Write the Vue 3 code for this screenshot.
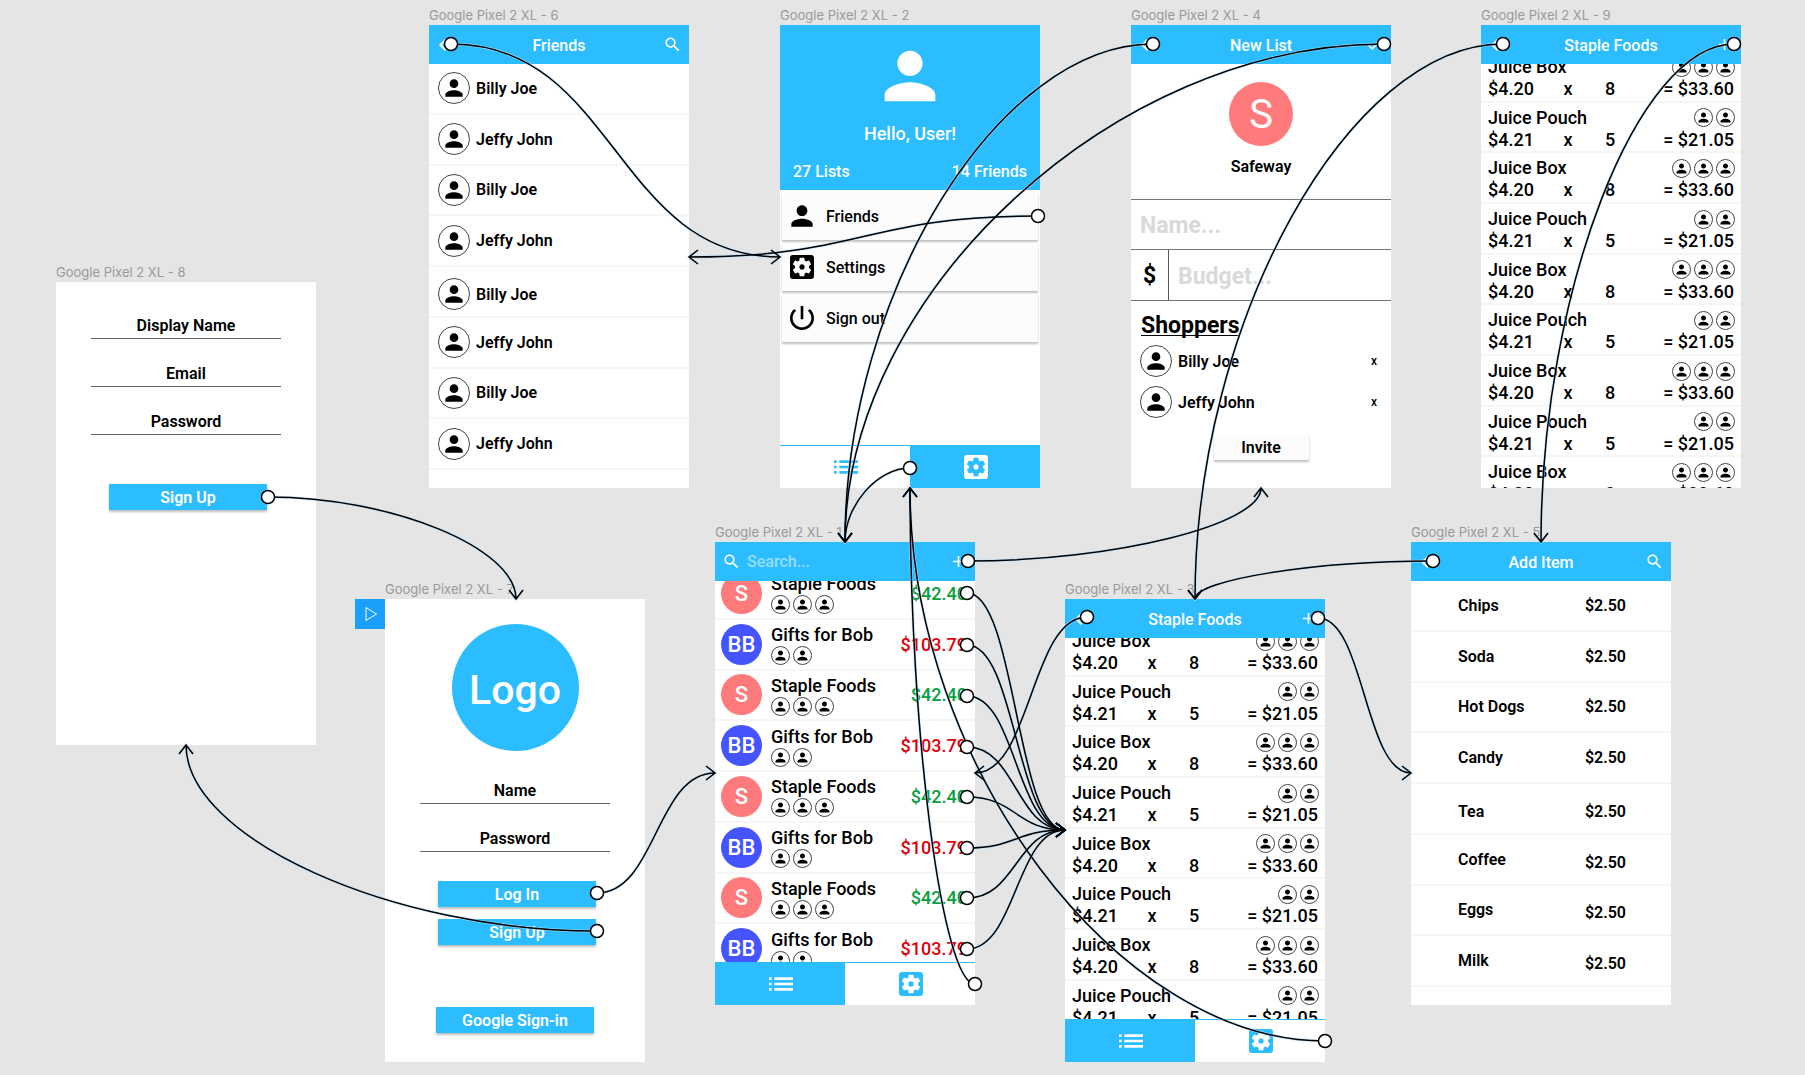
<script setup>
const frames = {
  friends: { x: 429, y: 25 },
  settings: { x: 780, y: 25 },
  newList: { x: 1131, y: 25 },
  itemsTop: { x: 1481, y: 25 },
  signUp: { x: 56, y: 282 },
  logIn: { x: 385, y: 599 },
  lists: { x: 715, y: 542 },
  items: { x: 1065, y: 599 },
  addItem: { x: 1411, y: 542 },
}

const place = (name) => ({ left: frames[name].x + 'px', top: frames[name].y + 'px' })

const friends = Array.from({ length: 8 }, (_, i) => ({
  name: i % 2 ? 'Jeffy John' : 'Billy Joe',
  low: i === 4,
}))

const lists = Array.from({ length: 8 }, (_, i) =>
  i % 2
    ? { name: 'Gifts for Bob', initials: 'BB', people: 2, total: '$103.79', over: true }
    : { name: 'Staple Foods', initials: 'S', people: 3, total: '$42.40', over: false },
)

const items = Array.from({ length: 9 }, (_, i) =>
  i % 2
    ? { name: 'Juice Pouch', price: '$4.21', qty: 5, total: '= $21.05', people: 2 }
    : { name: 'Juice Box', price: '$4.20', qty: 8, total: '= $33.60', people: 3 },
)

const itemScreens = [
  { key: 'itemsTop', label: 'Google Pixel 2 XL - 9', nav: false },
  { key: 'items', label: 'Google Pixel 2 XL - 3', nav: true },
]

const products = ['Chips', 'Soda', 'Hot Dogs', 'Candy', 'Tea', 'Coffee', 'Eggs', 'Milk'].map((name, i) => ({
  name,
  low: i === 4,
  lowPrice: i >= 4,
}))

const menu = [
  { icon: '#i-person', text: 'Friends' },
  { icon: '#i-settings', text: 'Settings' },
  { icon: '#i-power', text: 'Sign out' },
]

// Each link runs from a hotspot to the edge of a frame; `side` is the way the arrow points.
const links = [
  { from: [451, 44], to: [780, 257], side: 'right' },
  { from: [1038, 216], to: [689, 257], side: 'left' },
  { from: [1153, 44], to: [845, 542], side: 'down' },
  { from: [1384, 44], to: [845, 542], side: 'down' },
  { from: [1503, 44], to: [1195, 599], side: 'down' },
  { from: [1734, 44], to: [1541, 542], side: 'down' },
  { from: [268, 497], to: [516, 599], side: 'down' },
  { from: [597, 931], to: [186, 745], side: 'up' },
  { from: [597, 893], to: [715, 773], side: 'right' },
  { from: [968, 561], to: [1261, 488], side: 'up' },
  ...[593, 645, 696, 747, 797, 848, 898, 949].map((y) => ({ from: [967, y], to: [1065, 830], side: 'right' })),
  { from: [975, 984], to: [910, 488], side: 'up' },
  { from: [1325, 1041], to: [910, 488], side: 'up' },
  { from: [910, 468], to: [845, 542], side: 'down' },
  { from: [1087, 617], to: [975, 773], side: 'left' },
  { from: [1318, 618], to: [1411, 773], side: 'right' },
  { from: [1433, 561], to: [1195, 599], side: 'down' },
]

const curve = ({ from: [x1, y1], to: [x2, y2], side }) => {
  const mx = (x1 + x2) / 2
  const my = (y1 + y2) / 2
  return side === 'left' || side === 'right'
    ? `M${x1} ${y1}C${mx} ${y1} ${mx} ${y2} ${x2} ${y2}`
    : `M${x1} ${y1}C${mx} ${y1} ${x2} ${my} ${x2} ${y2}`
}

const head = ({ to: [x, y], side }) =>
  ({
    right: `M${x - 9} ${y - 7}L${x} ${y}L${x - 9} ${y + 7}`,
    left: `M${x + 9} ${y - 7}L${x} ${y}L${x + 9} ${y + 7}`,
    down: `M${x - 7} ${y - 9}L${x} ${y}L${x + 7} ${y - 9}`,
    up: `M${x - 7} ${y + 9}L${x} ${y}L${x + 7} ${y + 9}`,
  })[side]

const paths = links.map((l) => curve(l) + head(l))
</script>

<template>
  <main class="canvas">
    <svg class="defs" aria-hidden="true">
      <symbol id="i-person" viewBox="0 0 24 24"><path d="M12 12c2.21 0 4-1.79 4-4s-1.79-4-4-4-4 1.79-4 4 1.79 4 4 4zm0 2c-2.67 0-8 1.34-8 4v2h16v-2c0-2.66-5.33-4-8-4z" /></symbol>
      <symbol id="i-search" viewBox="0 0 24 24"><path d="M15.5 14h-.79l-.28-.27C15.41 12.59 16 11.11 16 9.5 16 5.91 13.09 3 9.5 3S3 5.91 3 9.5 5.91 16 9.5 16c1.61 0 3.09-.59 4.23-1.57l.27.28v.79l5 4.99L20.49 19l-4.99-5zm-6 0C7.01 14 5 11.99 5 9.5S7.01 5 9.5 5 14 7.01 14 9.5 11.99 14 9.5 14z" /></symbol>
      <symbol id="i-back" viewBox="0 0 24 24"><path d="M15.41 7.41L14 6l-6 6 6 6 1.41-1.41L10.83 12z" /></symbol>
      <symbol id="i-add" viewBox="0 0 24 24"><path d="M19 13h-6v6h-2v-6H5v-2h6V5h2v6h6v2z" /></symbol>
      <symbol id="i-check" viewBox="0 0 24 24"><path d="M9 16.17L4.83 12l-1.42 1.41L9 19 21 7l-1.41-1.41z" /></symbol>
      <symbol id="i-list" viewBox="0 0 24 24"><path d="M3 13h2v-2H3v2zm0 4h2v-2H3v2zm0-8h2V7H3v2zm4 4h14v-2H7v2zm0 4h14v-2H7v2zM7 7v2h14V7H7z" /></symbol>
      <symbol id="i-power" viewBox="0 0 24 24"><path d="M13 3h-2v10h2V3zm4.83 2.17l-1.42 1.42C17.99 7.86 19 9.81 19 12c0 3.87-3.13 7-7 7s-7-3.13-7-7c0-2.19 1.01-4.14 2.58-5.42L6.17 5.17C4.23 6.82 3 9.26 3 12c0 4.97 4.03 9 9 9s9-4.03 9-9c0-2.74-1.23-5.18-3.17-6.83z" /></symbol>
      <symbol id="i-settings" viewBox="0 0 24 24"><path d="M12 10c-1.1 0-2 .9-2 2s.9 2 2 2 2-.9 2-2-.9-2-2-2zm7-7H5c-1.11 0-2 .9-2 2v14c0 1.1.89 2 2 2h14c1.11 0 2-.9 2-2V5c0-1.1-.89-2-2-2zm-1.75 9c0 .23-.02.46-.05.68l1.48 1.16c.13.11.17.3.08.45l-1.4 2.42c-.09.15-.27.21-.43.15l-1.74-.7c-.36.28-.76.51-1.18.69l-.26 1.85c-.03.17-.18.3-.35.3h-2.8c-.17 0-.32-.13-.35-.29l-.26-1.85c-.43-.18-.82-.41-1.18-.69l-1.74.7c-.16.06-.34 0-.43-.15l-1.4-2.42c-.09-.15-.05-.34.08-.45l1.48-1.16c-.03-.23-.05-.46-.05-.69 0-.23.02-.46.05-.68l-1.48-1.16c-.13-.11-.17-.3-.08-.45l1.4-2.42c.09-.15.27-.21.43-.15l1.74.7c.36-.28.76-.51 1.18-.69l.26-1.85c.03-.17.18-.3.35-.3h2.8c.17 0 .32.13.35.29l.26 1.85c.43.18.82.41 1.18.69l1.74-.7c.16-.06.34 0 .43.15l1.4 2.42c.09.15.05.34-.08.45l-1.48 1.16c.03.23.05.46.05.69z" /></symbol>
    </svg>

    <!-- Friends -->
    <section class="frame" :style="place('friends')">
      <h2 class="label">Google Pixel 2 XL - 6</h2>
      <header class="bar">
        <button class="back" aria-label="Back"><svg><use href="#i-back" /></svg></button>
        <h3 class="title">Friends</h3>
        <button class="action" aria-label="Search"><svg><use href="#i-search" /></svg></button>
      </header>
      <ul class="rows eight">
        <li v-for="(f, i) in friends" :key="i" class="row friend">
          <span class="person" :class="{ low: f.low }">
            <span class="face"><svg><use href="#i-person" /></svg></span>{{ f.name }}
          </span>
        </li>
      </ul>
    </section>

    <!-- Settings -->
    <section class="frame" :style="place('settings')">
      <h2 class="label">Google Pixel 2 XL - 2</h2>
      <header class="profile">
        <svg class="portrait"><use href="#i-person" /></svg>
        <h3 class="hello">Hello, User!</h3>
        <div class="stats"><span>27 Lists</span><span>14 Friends</span></div>
      </header>
      <div class="menu">
        <button v-for="m in menu" :key="m.text" class="entry">
          <svg><use :href="m.icon" /></svg>{{ m.text }}
        </button>
      </div>
      <nav class="tabs">
        <button class="tab" aria-label="Lists"><svg><use href="#i-list" /></svg></button>
        <button class="tab active" aria-label="Settings"><svg><use href="#i-settings" /></svg></button>
      </nav>
    </section>

    <!-- New list -->
    <section class="frame" :style="place('newList')">
      <h2 class="label">Google Pixel 2 XL - 4</h2>
      <header class="bar">
        <button class="back" aria-label="Back"><svg><use href="#i-back" /></svg></button>
        <h3 class="title">New List</h3>
        <button class="action" aria-label="Save"><svg><use href="#i-check" /></svg></button>
      </header>
      <div class="store">
        <span class="store-badge">S</span>
        <p class="store-name">Safeway</p>
      </div>
      <div class="entry-line"><input class="big" type="text" placeholder="Name..." aria-label="Name" /></div>
      <div class="entry-line last">
        <label class="currency" for="budget">$</label>
        <input id="budget" class="big" type="text" placeholder="Budget..." />
      </div>
      <h3 class="shoppers-title">Shoppers</h3>
      <ul class="shoppers">
        <li v-for="n in ['Billy Joe', 'Jeffy John']" :key="n" class="shopper">
          <span class="person"><span class="face"><svg><use href="#i-person" /></svg></span>{{ n }}</span>
          <button class="remove" :aria-label="'Remove ' + n">x</button>
        </li>
      </ul>
      <button class="invite">Invite</button>
    </section>

    <!-- List contents -->
    <section v-for="s in itemScreens" :key="s.key" class="frame" :style="place(s.key)">
      <h2 class="label">{{ s.label }}</h2>
      <header class="bar">
        <button class="back" aria-label="Back"><svg><use href="#i-back" /></svg></button>
        <h3 class="title">Staple Foods</h3>
        <button class="action" aria-label="Add"><svg><use href="#i-add" /></svg></button>
      </header>
      <div class="scroller">
        <ul class="rows nine scrolled">
          <li v-for="(it, i) in items" :key="i" class="row item">
            <div class="item-head">
              <span>{{ it.name }}</span>
              <span class="bubbles">
                <span v-for="p in it.people" :key="p" class="bubble"><svg><use href="#i-person" /></svg></span>
              </span>
            </div>
            <div class="item-sum">
              <span>{{ it.price }}</span><span>x</span><span>{{ it.qty }}</span><span>{{ it.total }}</span>
            </div>
          </li>
        </ul>
      </div>
      <nav v-if="s.nav" class="tabs">
        <button class="tab active" aria-label="Lists"><svg><use href="#i-list" /></svg></button>
        <button class="tab" aria-label="Settings"><svg><use href="#i-settings" /></svg></button>
      </nav>
    </section>

    <!-- Sign up -->
    <section class="frame" :style="place('signUp')">
      <h2 class="label">Google Pixel 2 XL - 8</h2>
      <form class="form signup" @submit.prevent>
        <input class="field" type="text" placeholder="Display Name" aria-label="Display Name" />
        <input class="field" type="email" placeholder="Email" aria-label="Email" />
        <input class="field" type="password" placeholder="Password" aria-label="Password" />
        <div class="actions signup-actions"><button class="cta">Sign Up</button></div>
      </form>
    </section>

    <!-- Log in -->
    <section class="frame" :style="place('logIn')">
      <h2 class="label">Google Pixel 2 XL - 7</h2>
      <button class="play" aria-label="Present">
        <svg viewBox="0 0 30 30"><path d="M11 8.5V21.5L21.5 15Z" /></svg>
      </button>
      <form class="form login" @submit.prevent>
        <div class="logo">Logo</div>
        <input class="field" type="text" placeholder="Name" aria-label="Name" />
        <input class="field" type="password" placeholder="Password" aria-label="Password" />
        <div class="actions login-actions">
          <button class="cta">Log In</button>
          <button class="cta">Sign Up</button>
        </div>
        <button class="cta google">Google Sign-in</button>
      </form>
    </section>

    <!-- Lists -->
    <section class="frame" :style="place('lists')">
      <h2 class="label">Google Pixel 2 XL - 1</h2>
      <header class="bar search-bar">
        <svg><use href="#i-search" /></svg>
        <input class="search" type="text" placeholder="Search..." aria-label="Search" />
        <button class="action" aria-label="Add"><svg><use href="#i-add" /></svg></button>
      </header>
      <div class="scroller">
        <ul class="rows eight scrolled">
          <li v-for="(l, i) in lists" :key="i" class="row list">
            <span class="badge" :class="{ blue: l.over }">{{ l.initials }}</span>
            <div class="list-body">
              <span>{{ l.name }}</span>
              <span class="bubbles">
                <span v-for="p in l.people" :key="p" class="bubble"><svg><use href="#i-person" /></svg></span>
              </span>
            </div>
            <span class="total" :class="{ over: l.over }">{{ l.total }}</span>
          </li>
        </ul>
      </div>
      <nav class="tabs">
        <button class="tab active" aria-label="Lists"><svg><use href="#i-list" /></svg></button>
        <button class="tab" aria-label="Settings"><svg><use href="#i-settings" /></svg></button>
      </nav>
    </section>

    <!-- Add item -->
    <section class="frame" :style="place('addItem')">
      <h2 class="label">Google Pixel 2 XL - 5</h2>
      <header class="bar">
        <button class="back" aria-label="Back"><svg><use href="#i-back" /></svg></button>
        <h3 class="title">Add Item</h3>
        <button class="action" aria-label="Search"><svg><use href="#i-search" /></svg></button>
      </header>
      <ul class="rows eight">
        <li v-for="p in products" :key="p.name" class="row product">
          <span :class="{ low: p.low }">{{ p.name }}</span>
          <span :class="{ low: p.lowPrice }">$2.50</span>
        </li>
      </ul>
    </section>

    <svg class="wires" aria-hidden="true">
      <path v-for="(d, i) in paths" :key="'h' + i" class="halo" :d="d" />
      <path v-for="(d, i) in paths" :key="'w' + i" class="wire" :d="d" />
      <circle v-for="(l, i) in links" :key="'c' + i" class="dot" :cx="l.from[0]" :cy="l.from[1]" r="6.5" />
    </svg>
  </main>
</template>

<style>
body {
  margin: 0;
  background: #e5e5e5;
}
</style>

<style scoped>
.canvas {
  position: relative;
  height: 100vh;
  overflow: hidden;
  background: #e5e5e5;
  color: #000;
  font: 500 18px/23px Roboto, 'Liberation Sans', sans-serif;
}
.defs {
  position: absolute;
  width: 0;
  height: 0;
}
.canvas * {
  box-sizing: border-box;
}
h2, h3, p, ul {
  margin: 0;
  padding: 0;
  font: inherit;
}
ul {
  list-style: none;
}
svg {
  display: block;
  flex: none;
  fill: currentColor;
}
button {
  margin: 0;
  padding: 0;
  border: 0;
  background: none;
  color: inherit;
  font: inherit;
}
input {
  min-width: 0;
  margin: 0;
  padding: 0;
  border: 0;
  outline: 0;
  background: none;
  font: inherit;
}
.frame {
  position: absolute;
  display: flex;
  flex-direction: column;
  width: 260px;
  height: 463px;
  background: #fff;
}
.label {
  position: absolute;
  left: 0;
  bottom: 100%;
  color: #999;
  font: 400 13px/20px Inter, sans-serif;
  white-space: nowrap;
}

/* Top bar */
.bar {
  display: grid;
  grid-template-columns: 28px 1fr 28px;
  align-items: center;
  flex: none;
  height: 39px;
  padding: 0 2px;
  background: #2bbdff;
  color: #fff;
  font-size: 16px;
}
.title {
  padding-top: 1px;
  text-align: center;
}
.back svg {
  width: 24px;
  height: 24px;
}
.action {
  display: flex;
  justify-content: flex-end;
  padding-right: 5px;
}
.action svg, .search-bar > svg {
  width: 19px;
  height: 19px;
}
.search-bar {
  grid-template-columns: 25px 1fr 28px;
  padding-left: 7px;
}
.search {
  color: #fff;
}
.search::placeholder {
  color: #fff;
  opacity: 0.5;
}

/* Rows */
.rows {
  display: grid;
  grid-auto-rows: 1fr;
  flex: none;
}
.eight {
  height: 406px;
}
.nine {
  height: 456px;
}
.scroller {
  flex: 1;
  min-height: 0;
  overflow: hidden;
}
.scrolled {
  margin-top: -12px;
}
.row {
  border-bottom: 2px solid #f6f6f6;
}
.low {
  padding-top: 6px;
}
.friend {
  display: flex;
  align-items: center;
  padding-left: 9px;
}
.person {
  display: flex;
  align-items: center;
  gap: 6px;
  font-size: 16px;
  font-weight: 600;
}
.face, .bubble {
  display: flex;
  align-items: center;
  justify-content: center;
  border: 1px solid #444;
  border-radius: 50%;
}
.face {
  width: 32px;
  height: 32px;
}
.face svg {
  width: 26px;
  height: 26px;
}
.bubbles {
  display: flex;
  gap: 3px;
}
.bubble {
  width: 19px;
  height: 19px;
}
.bubble svg {
  width: 15px;
  height: 15px;
}
.product {
  display: flex;
  align-items: center;
  justify-content: space-between;
  padding: 0 45px 0 47px;
  font-size: 16px;
  font-weight: 600;
}
.item {
  padding: 4px 6px 0 7px;
  line-height: 22px;
}
.item-head {
  display: flex;
  align-items: center;
  justify-content: space-between;
}
.item-sum {
  display: grid;
  grid-template-columns: 70px 20px 64px 1fr;
  padding-right: 1px;
  text-align: center;
}
.item-sum span:first-child {
  text-align: left;
}
.item-sum span:last-child {
  text-align: right;
}
.list {
  display: flex;
  align-items: center;
  padding: 0 8px 0 6px;
}
.badge {
  display: flex;
  align-items: center;
  justify-content: center;
  width: 41px;
  height: 41px;
  border-radius: 50%;
  background: #ff7a7a;
  color: #fff;
  font-size: 22px;
}
.blue {
  background: #4455ff;
}
.list-body {
  flex: 1;
  padding-left: 9px;
}
.total {
  color: #0a9e3f;
}
.over {
  color: #e0000a;
}

/* Bottom tabs */
.tabs {
  display: flex;
  flex: none;
  height: 43px;
  margin-top: auto;
  border-top: 1px solid #2bbdff;
}
.tab {
  display: flex;
  flex: 1;
  align-items: center;
  justify-content: center;
  padding-left: 2px;
  background: #fff;
  color: #2bbdff;
}
.tab.active {
  background: #2bbdff;
  color: #fff;
}
.tab svg {
  width: 32px;
  height: 32px;
}

/* Settings */
.profile {
  display: flex;
  flex-direction: column;
  align-items: center;
  height: 165px;
  padding-top: 13px;
  background: #2bbdff;
  color: #fff;
}
.portrait {
  width: 76px;
  height: 76px;
}
.hello {
  margin-top: 8px;
}
.stats {
  display: flex;
  justify-content: space-between;
  align-self: stretch;
  margin-top: 15px;
  padding: 0 13px;
  font-size: 16px;
}
.menu {
  display: flex;
  flex-direction: column;
  gap: 3px;
  padding: 2px;
}
.entry {
  display: flex;
  align-items: center;
  gap: 8px;
  height: 48px;
  padding-left: 4px;
  background: #fcfcfc;
  box-shadow: 0 2px 2px rgba(0, 0, 0, 0.25);
  font-size: 16px;
}
.entry svg {
  width: 32px;
  height: 32px;
}

/* New list */
.store {
  display: flex;
  flex-direction: column;
  align-items: center;
  height: 135px;
  padding-top: 18px;
}
.store-badge {
  display: flex;
  align-items: center;
  justify-content: center;
  width: 64px;
  height: 64px;
  border-radius: 50%;
  background: #ff7a7a;
  color: #fff;
  font-size: 40px;
  font-weight: 400;
}
.store-name {
  margin-top: 9px;
  font-size: 16px;
  font-weight: 600;
}
.entry-line {
  display: flex;
  height: 50px;
  border-top: 1px solid #777;
}
.entry-line.last {
  height: 52px;
  border-bottom: 1px solid #777;
}
.currency, .big {
  font-size: 23px;
  font-weight: 700;
}
.currency {
  display: flex;
  align-items: center;
  justify-content: center;
  width: 38px;
  border-right: 1px solid #555;
}
.big {
  flex: 1;
  padding: 2px 0 0 9px;
}
.big::placeholder {
  color: #d9d9d9;
  opacity: 1;
}
.shoppers-title {
  align-self: flex-start;
  margin: 12px 0 0 10px;
  font-size: 23px;
  line-height: 26px;
  font-weight: 700;
  text-decoration: underline 1px;
  text-underline-offset: 2px;
  text-decoration-skip-ink: none;
}
.shoppers {
  display: flex;
  flex-direction: column;
  gap: 9px;
  margin-top: 6px;
  padding: 0 14px 0 9px;
}
.shopper {
  display: flex;
  align-items: center;
  justify-content: space-between;
}
.remove {
  font-size: 12px;
}
.invite {
  align-self: center;
  width: 95px;
  height: 25px;
  margin-top: 17px;
  background: #fcfcfc;
  box-shadow: 0 2px 2px rgba(0, 0, 0, 0.25);
  font-size: 16px;
  font-weight: 600;
}

/* Sign up and log in */
.form {
  display: flex;
  flex-direction: column;
  align-items: stretch;
  padding: 0 35px;
}
.signup {
  padding-top: 9px;
}
.login {
  padding-top: 25px;
}
.field {
  height: 48px;
  padding-top: 22px;
  border-bottom: 1px solid #666;
  font-size: 16px;
  font-weight: 600;
  text-align: center;
}
.field::placeholder {
  color: #000;
  opacity: 1;
}
.actions {
  display: flex;
  flex-direction: column;
  align-items: center;
  gap: 12px;
  padding-left: 4px;
}
.signup-actions {
  margin-top: 49px;
}
.login-actions {
  margin-top: 29px;
}
.cta {
  width: 158px;
  height: 26px;
  background: #2bbdff;
  box-shadow: 0 2px 2px rgba(0, 0, 0, 0.25);
  color: #fff;
  font-size: 16px;
  font-weight: 600;
}
.google {
  align-self: center;
  margin-top: 62px;
}
.logo {
  display: flex;
  align-items: center;
  justify-content: center;
  align-self: center;
  width: 127px;
  height: 127px;
  margin-bottom: 5px;
  padding-top: 6px;
  border-radius: 50%;
  background: #2bbdff;
  color: #fff;
  font-size: 41px;
}
.play {
  position: absolute;
  top: 0;
  right: 100%;
  width: 30px;
  height: 30px;
  background: #1a9ffb;
}
.play path {
  fill: none;
  stroke: #fff;
}

/* Prototype connections */
.wires {
  position: absolute;
  inset: 0;
  width: 100%;
  height: 100%;
  pointer-events: none;
}
.halo, .wire {
  fill: none;
}
.halo {
  stroke: #b5dfff;
  stroke-width: 3;
  stroke-opacity: 0.6;
}
.wire {
  stroke: #000;
  stroke-width: 1.5;
}
.dot {
  fill: #fff;
  stroke: #000;
  stroke-width: 1.5;
}
</style>
